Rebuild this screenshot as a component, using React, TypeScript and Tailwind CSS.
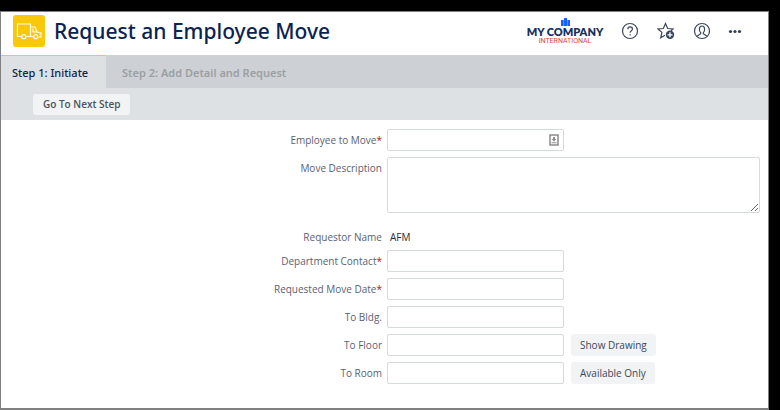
import type { ReactNode } from "react";

const box = "h-[22px] w-[177px] rounded-[2px] border border-[#d5dadc] bg-white px-1 text-[10px] text-[#0b2350] outline-none";

function Row({ label, id, required, children }: { label: string; id: string; required?: boolean; children: ReactNode }) {
  return (
    <div className="grid grid-cols-2 gap-x-[5px]">
      <label htmlFor={id} className="whitespace-nowrap text-right leading-[22px]">
        {label}
        {required && <span className="text-[#a01818]">*</span>}
      </label>
      <div className="flex min-w-0 gap-[7px]">{children}</div>
    </div>
  );
}

function SideButton({ children }: { children: ReactNode }) {
  return (
    <button type="button" className="h-[22px] whitespace-nowrap rounded-[3px] bg-[#f1f3f5] px-[9px] text-[10px] font-medium text-[#3c4659]">
      {children}
    </button>
  );
}

function TruckIcon() {
  return (
    <svg viewBox="0 0 32 32" className="size-8 rounded-[3px] bg-[#f9c80a]" fill="none" stroke="#fffbe6" strokeWidth="1.2" aria-hidden="true">
      <path d="M8.500 21.500H4.500V9h13v12.500H13M17.500 21.500h3M17.500 12h4.500l2 5 4 1v4h-2.500M20 13.500v3.500h4" />
      <circle cx="10.800" cy="21.700" r="2" />
      <circle cx="22.800" cy="21.700" r="2" />
    </svg>
  );
}

function CompanyLogo() {
  return (
    <div className="flex w-[74px] flex-col items-center whitespace-nowrap">
      <svg viewBox="0 0 9 8" className="h-2 w-[9px]" fill="#1463ff" aria-hidden="true">
        <path d="M0 2h2.700v6H0zM3 0h3v8H3zM6.300 2H9v6H6.300z" />
      </svg>
      <span className="text-[11px] font-extrabold leading-[12px] text-[#17325c]" style={{ fontFamily: '"Lato", sans-serif' }}>MY COMPANY</span>
      <span className="text-[7px] leading-[7px] text-[#d9473d]" style={{ fontFamily: '"Roboto", sans-serif' }}>INTERNATIONAL</span>
    </div>
  );
}

const iconProps = { viewBox: "0 0 18 18", className: "size-[18px]", fill: "none", stroke: "#3b4658", strokeWidth: 1.2, "aria-hidden": true };

export default function App() {
  return (
    <div className="min-h-screen bg-black pr-[11px] pt-[11px] text-[10px] text-[#596174]" style={{ fontFamily: '"Open Sans", "Noto Sans", sans-serif' }}>
      <main className="border-x border-t border-b-2 border-[#808080] bg-white">
        <header className="flex h-[43px] items-center pb-[5px] pl-3 pr-[26px]">
          <TruckIcon />
          <h1 className="ml-[9px] whitespace-nowrap text-[21px] font-medium leading-8 text-[#0b2350]" style={{ fontFamily: '"Noto Sans", sans-serif' }}>
            Request an Employee Move
          </h1>
          <div className="ml-auto flex items-center">
            <CompanyLogo />
            <button type="button" aria-label="Help" className="ml-[19px]">
              <svg {...iconProps}>
                <circle cx="9" cy="9" r="7.500" />
                <path d="M6.800 7.200c0-3.200 4.700-3 4.700-.2 0 1.700-2.400 1.800-2.400 3.800M9.100 12.200v1.200" />
              </svg>
            </button>
            <button type="button" aria-label="Add to favorites" className="ml-[18px]">
              <svg {...iconProps}>
                <path d="M8 13.200l-4.300 2.600 1.200-5.400L1 7l5.300-.5L8.500 1.500l2.200 5L16 7l-2 1.800" />
                <circle cx="13" cy="12.800" r="4.200" fill="#3b4658" stroke="none" />
                <path d="M13 10.300v5M10.500 12.800h5" stroke="#fff" strokeWidth="1.300" />
              </svg>
            </button>
            <button type="button" aria-label="Account" className="ml-[18px]">
              <svg {...iconProps}>
                <circle cx="9" cy="9" r="7.500" />
                <path d="M9 4c-3.200 0-3.200 5.200-1.300 6.700v1L4.200 14M9 4c3.200 0 3.200 5.200 1.300 6.700v1l3.500 2.300" />
              </svg>
            </button>
            <button type="button" aria-label="More" className="ml-[17px]">
              <svg viewBox="0 0 14 18" className="h-[18px] w-[14px]" fill="#343e50" aria-hidden="true">
                <circle cx="2.500" cy="9.500" r="1.600" />
                <circle cx="7" cy="9.500" r="1.600" />
                <circle cx="11.500" cy="9.500" r="1.600" />
              </svg>
            </button>
          </div>
        </header>

        <nav className="flex h-[33px] bg-[#cdd1d5] text-[11px] font-semibold" style={{ fontFamily: '"Noto Sans", sans-serif' }}>
          <button type="button" className="w-[105px] whitespace-nowrap border-t border-[#f4c92e] bg-[#dee1e4] pl-[11px] pt-[2px] text-left font-medium text-[#0b2350]">
            Step 1: Initiate
          </button>
          <button type="button" className="whitespace-nowrap border-t border-transparent px-4 pt-[2px] text-[#9b9fa3]">
            Step 2: Add Detail and Request
          </button>
        </nav>

        <div className="flex h-8 items-center bg-[#dee1e4] pl-8">
          <button type="button" className="h-[21px] whitespace-nowrap rounded-[3px] bg-[#f1f3f5] px-[10px] text-[10px] font-semibold text-[#4a5261]">
            Go To Next Step
          </button>
        </div>

        <form className="flex flex-col gap-[6px] pb-6 pt-[9px]">
          <Row label="Employee to Move" id="employee" required>
            <div className="relative flex">
              <input id="employee" className={box} />
              <svg viewBox="0 0 10 12" className="absolute right-[5px] top-[5px] h-3 w-[10px]" fill="none" aria-hidden="true">
                <path d="M1 1h8v10H1z" stroke="#8c8c8c" strokeWidth="1.500" />
                <path d="M4 3h2v2h1.500L5 7.500 2.500 5H4zM2.500 8.200h5v1h-5z" fill="#8c8c8c" />
              </svg>
            </div>
          </Row>
          <Row label="Move Description" id="description">
            <textarea id="description" className="mr-2 h-14 flex-1 rounded-[2px] border border-[#d5dadc] bg-white p-1 outline-none" />
          </Row>
          <div className="pt-[11px] leading-[14px] [&_label]:leading-[14px]">
            <Row label="Requestor Name" id="requestor">
              <output id="requestor" className="pl-[3px] text-[#1f2937]">AFM</output>
            </Row>
          </div>
          <Row label="Department Contact" id="contact" required>
            <input id="contact" className={box} />
          </Row>
          <Row label="Requested Move Date" id="date" required>
            <input id="date" className={box} />
          </Row>
          <Row label="To Bldg." id="building">
            <input id="building" className={box} />
          </Row>
          <Row label="To Floor" id="floor">
            <input id="floor" className={box} />
            <SideButton>Show Drawing</SideButton>
          </Row>
          <Row label="To Room" id="room">
            <input id="room" className={box} />
            <SideButton>Available Only</SideButton>
          </Row>
        </form>
      </main>
    </div>
  );
}
